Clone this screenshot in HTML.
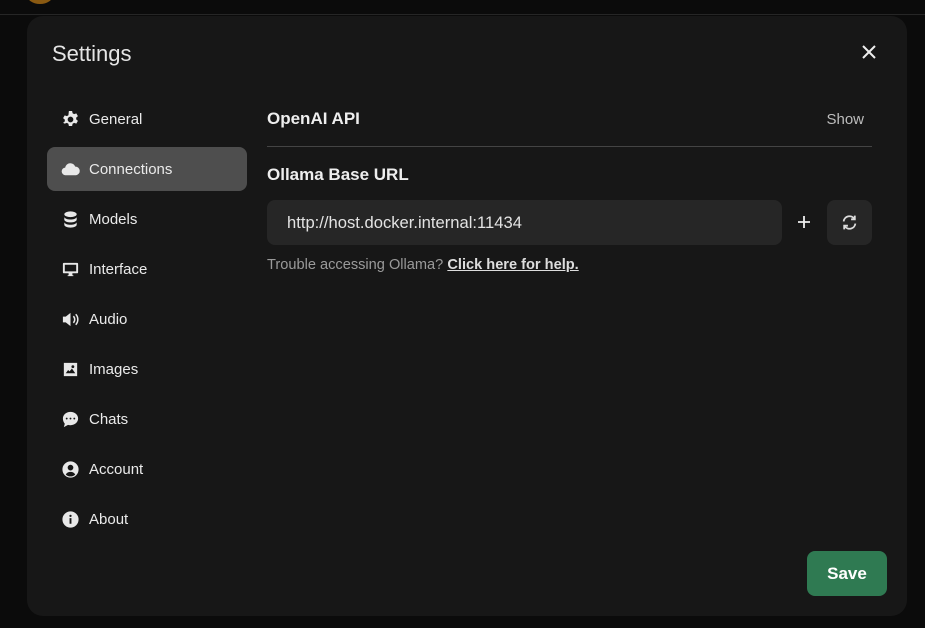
<!DOCTYPE html>
<html><head><style>
*{margin:0;padding:0;box-sizing:border-box}
body{width:925px;height:628px;background:#0b0b0b;font-family:"Liberation Sans",sans-serif;color:#ececec;position:relative;overflow:hidden}
.topline{position:absolute;left:0;top:14px;width:925px;height:1px;background:#262626}
.avatar{position:absolute;left:27px;top:-14px;width:26px;height:18px;border-radius:50%;background:#8a5a12}
.modal{position:absolute;left:27px;top:16px;width:880px;height:600px;background:#171717;border-radius:16px}
.title{position:absolute;left:25px;top:25px;font-size:22px;color:#e5e5e5}
.close{position:absolute;left:835px;top:29px}
.nav{position:absolute;left:20px;top:81px;width:200px}
.item{height:44px;margin-bottom:6px;border-radius:8px;display:flex;align-items:center;padding-left:14px;font-size:15px;color:#eaeaea}
.item.active{background:#4e4e4e}
.item svg{width:19px;height:19px;margin-right:9px;fill:#e8e8e8}
.content{position:absolute;left:240px;top:80px;width:605px}
.h{font-size:17px;font-weight:bold;color:#eee}
.show{position:absolute;right:8px;top:15px;font-size:15px;color:#bdbdbd}
.hr{position:absolute;left:0;top:50px;width:605px;height:1px;background:#444}
.input{position:absolute;left:0;top:104px;width:515px;height:45px;background:#262626;border-radius:8px;font-size:16.6px;color:#e3e3e3;padding:13px 0 0 20px}
.plus{position:absolute;left:530px;top:119px}
.ref{position:absolute;left:560px;top:104px;width:45px;height:45px;background:#262626;border-radius:8px;display:flex;align-items:center;justify-content:center}
.help{position:absolute;left:0;top:161px;font-size:14.6px;color:#9a9a9a}
.help u{color:#ddd;font-weight:bold}
.save{position:absolute;left:780px;top:535px;width:80px;height:45px;background:#2f7a52;border-radius:8px;color:#fff;font-size:17px;font-weight:bold;display:flex;align-items:center;justify-content:center}
</style></head><body>
<div class="avatar"></div><div class="topline"></div>
<div class="modal">
<div class="title">Settings</div>
<svg class="close" width="14" height="14" viewBox="0 0 14 14"><path d="M1 1L13 13M13 1L1 13" stroke="#eee" stroke-width="2"/></svg>
<div class="nav">
<div class="item"><svg viewBox="0 0 20 20"><path d="M8.3 1h3.4l.5 2.4 1.6.9 2.3-.8 1.7 2.9-1.8 1.6v1.9l1.8 1.6-1.7 2.9-2.3-.8-1.6.9-.5 2.4H8.3l-.5-2.4-1.6-.9-2.3.8L2.2 13.6 4 12V10.1L2.2 8.5 3.9 5.6l2.3.8 1.6-.9zM10 7a3 3 0 100 6 3 3 0 000-6z" fill-rule="evenodd"/></svg>General</div>
<div class="item active"><svg viewBox="0 0 20 20"><path d="M5 16a4 4 0 01-.6-8A5.5 5.5 0 0115 7a4.5 4.5 0 01.5 9z"/></svg>Connections</div>
<div class="item"><svg viewBox="0 0 20 20"><ellipse cx="10" cy="4.5" rx="6.5" ry="3"/><path d="M3.5 7.5c1 1.8 3.5 2.5 6.5 2.5s5.5-.7 6.5-2.5v3c-1 1.8-3.5 2.5-6.5 2.5s-5.5-.7-6.5-2.5zM3.5 13c1 1.8 3.5 2.5 6.5 2.5s5.5-.7 6.5-2.5v2.5c0 1.7-3 3-6.5 3s-6.5-1.3-6.5-3z"/></svg>Models</div>
<div class="item"><svg viewBox="0 0 20 20"><path d="M3 3h14a1 1 0 011 1v9a1 1 0 01-1 1H12v2h1v1H7v-1h1v-2H3a1 1 0 01-1-1V4a1 1 0 011-1zm1 2v7h12V5z" fill-rule="evenodd"/></svg>Interface</div>
<div class="item"><svg viewBox="0 0 20 20"><path d="M2 7h3l5-4v14l-5-4H2z"/><path d="M13 6.5a5 5 0 010 7M15.5 4.5a8 8 0 010 11" stroke="#e8e8e8" stroke-width="1.6" fill="none"/></svg>Audio</div>
<div class="item"><svg viewBox="0 0 20 20"><path d="M3 3h14v14H3zm2 11h10l-3.5-5-2.5 3-1.5-1.5zM12.5 5.5a1.5 1.5 0 100 3 1.5 1.5 0 000-3z" fill-rule="evenodd"/></svg>Images</div>
<div class="item"><svg viewBox="0 0 20 20"><path d="M10 2c4.4 0 8 3 8 7s-3.6 7-8 7c-1 0-1.8-.1-2.6-.4L3 18l1-3.5C2.8 13 2 11.1 2 9c0-4 3.6-7 8-7zM6 8a1 1 0 100 2 1 1 0 000-2zm4 0a1 1 0 100 2 1 1 0 000-2zm4 0a1 1 0 100 2 1 1 0 000-2z" fill-rule="evenodd"/></svg>Chats</div>
<div class="item"><svg viewBox="0 0 20 20"><path d="M10 1.5a8.5 8.5 0 110 17 8.5 8.5 0 010-17zM10 5a3 3 0 100 6 3 3 0 000-6zm-5 10.2A7 7 0 0015 15.2c-1-1.8-2.8-2.7-5-2.7s-4 .9-5 2.7z" fill-rule="evenodd"/></svg>Account</div>
<div class="item"><svg viewBox="0 0 20 20"><path d="M10 1.5a8.5 8.5 0 110 17 8.5 8.5 0 010-17zM9 8.5v6h2v-6zM10 5a1.2 1.2 0 100 2.4A1.2 1.2 0 0010 5z" fill-rule="evenodd"/></svg>About</div>
</div>
<div class="content">
<div class="h" style="position:absolute;top:13px">OpenAI API</div>
<div class="show">Show</div>
<div class="hr"></div>
<div class="h" style="position:absolute;top:69px">Ollama Base URL</div>
<div class="input">http://host.docker.internal:11434</div>
<svg class="plus" width="14" height="14" viewBox="0 0 14 14"><path d="M7 1v12M1 7h12" stroke="#eee" stroke-width="1.8"/></svg>
<div class="ref"><svg width="17" height="17" viewBox="0 0 16 16" fill="none" stroke="#ddd" stroke-width="1.7"><path d="M2.5 7A5.5 5.5 0 0112.5 4.5M13.5 9A5.5 5.5 0 013.5 11.5"/><path d="M13 1.5v3.5H9.5M3 14.5V11h3.5"/></svg></div>
<div class="help">Trouble accessing Ollama? <u>Click here for help.</u></div>
</div>
<div class="save">Save</div>
</div>
</body></html>
